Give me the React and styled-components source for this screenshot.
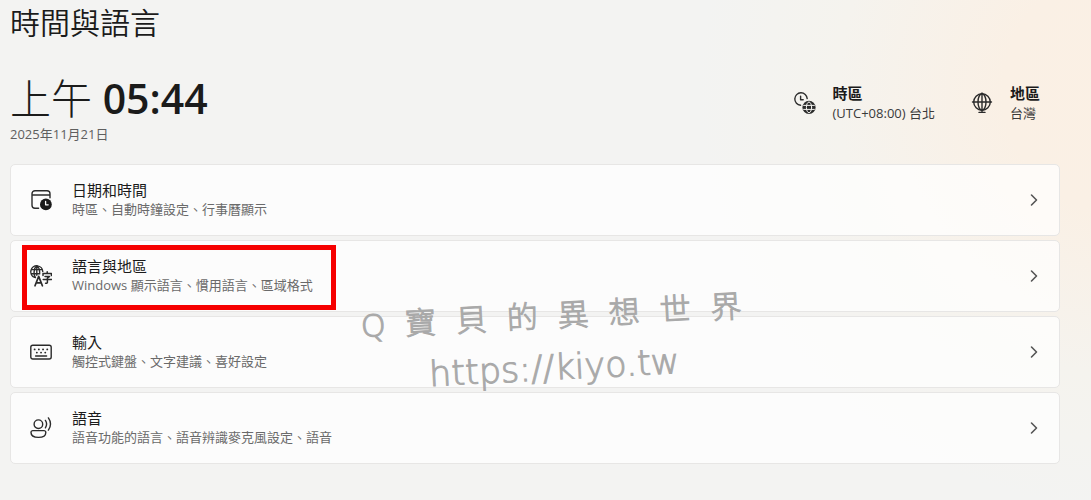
import React from "react";
import styled, { createGlobalStyle } from "styled-components";

const GlobalStyle = createGlobalStyle`
  * {
    box-sizing: border-box;
  }

  body {
    margin: 0;
    min-height: 100vh;
    background: radial-gradient(
        ellipse 40% 84% at 104% 18%,
        #fbf0e4 0%,
        #faf0e5 30%,
        #f5f3ee 68%,
        #f3f3f2 100%
      )
      no-repeat #f3f3f2;
    color: #1b1b1b;
    font-family: "Open Sans", "Noto Sans CJK TC", sans-serif;
  }
`;

const Page = styled.main`
  position: relative;
  padding: 5px 31px 36px 10px;
`;

const Title = styled.h1`
  margin: 0;
  font-size: 30px;
  line-height: 36px;
  font-weight: 350;
`;

const Hero = styled.header`
  display: flex;
  justify-content: space-between;
  align-items: flex-start;
  margin: 32px 0 20px;
`;

const Clock = styled.div`
  font-size: 41px;
  line-height: 51px;
  font-weight: 600;
`;

const Period = styled.span`
  font-weight: 300;
`;

const Today = styled.div`
  color: #5f5f5f;
  font-size: 13px;
  line-height: 20px;
`;

const Facts = styled.dl`
  display: flex;
  gap: 36px;
  margin: 10px 20px 0 0;
`;

const Fact = styled.div`
  display: grid;
  grid-template-columns: 22px auto;
  column-gap: 17px;
  align-items: center;

  svg {
    grid-row: 1 / 3;
  }
`;

const FactName = styled.dt`
  font-size: 15px;
  line-height: 20px;
  font-weight: 700;
`;

const FactValue = styled.dd`
  margin: 0;
  color: #3a3a3a;
  font-size: 13px;
  line-height: 20px;
`;

const List = styled.nav`
  display: flex;
  flex-direction: column;
  gap: 4px;
`;

const Row = styled.a`
  position: relative;
  display: flex;
  align-items: center;
  gap: 20px;
  min-height: 72px;
  padding: 8px 18px 8px 19px;
  border: 1px solid #e7e6e5;
  border-radius: 5px;
  background: rgba(255, 255, 255, 0.72);
  color: inherit;
  text-decoration: none;
`;

const RowText = styled.span`
  display: flex;
  flex: 1;
  flex-direction: column;
`;

const RowName = styled.span`
  font-size: 15px;
  line-height: 19px;
`;

const RowHint = styled.span`
  color: #6a6a6a;
  font-size: 13px;
  line-height: 19px;
`;

const Marker = styled.span`
  position: absolute;
  left: 11px;
  top: 4px;
  width: 314px;
  height: 65px;
  border: 5px solid #f60000;
  pointer-events: none;
`;

const Watermark = styled.div`
  position: absolute;
  left: 361px;
  top: 291px;
  color: #a9a9a9;
  -webkit-text-stroke: 1px #a9a9a9;
  pointer-events: none;
`;

const WatermarkName = styled.div`
  display: flex;
  gap: 20px;
  font-size: 31px;
  font-weight: 300;
  line-height: 48px;
  transform: rotate(-3deg);
`;

const WatermarkUrl = styled.div`
  margin: 5px 0 0 68px;
  font-family: "DejaVu Sans", sans-serif;
  font-size: 35px;
  font-weight: 200;
  line-height: 44px;
  transform: rotate(-3deg);
`;

const Icon = ({ children, size = 22 }) => (
  <svg
    width={size}
    height={size}
    viewBox={`0 0 ${size} ${size}`}
    fill="none"
    stroke="#2b2b2b"
    strokeWidth="1.4"
    strokeLinecap="round"
    strokeLinejoin="round"
    aria-hidden="true"
  >
    {children}
  </svg>
);

const TimeZoneIcon = () => (
  <Icon>
    <path d="M6.6 13.2A6.2 6.2 0 1 1 13.2 6.6M6.6 4.2v3.6h2.6" />
    <circle cx="15" cy="15.4" r="6.6" fill="#2b2b2b" stroke="none" />
    <g stroke="#f4f3f0" strokeWidth="1">
      <ellipse cx="15" cy="15.4" rx="2.6" ry="5.4" />
      <path d="M9.6 13.4h10.8M9.6 17.4h10.8" />
    </g>
  </Icon>
);

const RegionIcon = () => (
  <Icon>
    <circle cx="11" cy="10" r="8.3" />
    <ellipse cx="11" cy="10" rx="4" ry="8.3" />
    <path d="M1.5 10h19M11 1v18.5M8 20.4h6" />
  </Icon>
);

const DateIcon = () => (
  <Icon>
    <path d="M8.6 19.3H5a3 3 0 0 1-3-3V4.7a3 3 0 0 1 3-3h12a3 3 0 0 1 3 3v4M2 6h18" />
    <circle cx="15.9" cy="15.4" r="5.9" fill="#1b1b1b" stroke="none" />
    <path d="M15.6 12.4v3.4h2.6" stroke="#fff" strokeWidth="1.3" />
  </Icon>
);

const LanguageIcon = () => (
  <Icon>
    <g strokeWidth="1.4">
      <path d="M4.6 12.4A6 6 0 1 1 12.8 6.6M1.2 4.6h11M1.2 8.8h8.6" />
      <path d="M5.4 12.6C3.2 9 3.9 3 6.8 .8 8.7 2.2 9.7 4.600 9.7 7.4M6.8 .8v9.400" />
    </g>
    <path d="M5 20.8 8.7 11.400 12.4 20.8M6.2 17.8h5" strokeWidth="1.7" />
    <path
      d="M17.200 6.8v1.400M13 10.400v-1.800h8.400v1.800M15 11.400h4.600l-2.200 1.800v4.200q0 1-1.800.8M13.200 14.400h8.400"
      strokeWidth="1.5"
    />
  </Icon>
);

const KeyboardIcon = () => (
  <Icon>
    <rect x="0.8" y="4.2" width="20.4" height="13.8" rx="2" />
    <path
      d="M4.6 8.4h.1M8.8 8.4h.1M13 8.4h.1M17.2 8.4h.1M6.8 11.6h.1M11 11.6h.1M15.2 11.6h.1"
      strokeWidth="1.8"
    />
    <path d="M5.6 15h11" />
  </Icon>
);

const SpeechIcon = () => (
  <Icon>
    <circle cx="8.4" cy="7.2" r="4.3" />
    <path d="M2.8 13.6h11.2a1.800 1.800 0 0 1 1.800 1.800c0 3.2-3.2 5-7.4 5S1 18.6 1 15.4a1.800 1.800 0 0 1 1.800-1.800zM15.4 3.4q2.4 3.6 0 7.4M18.4 .9q4.2 6 0 12.2" />
  </Icon>
);

const ChevronIcon = () => (
  <Icon size={14}>
    <path d="M4.5 2 9.5 7 4.5 12" stroke="#555" strokeWidth="1.6" />
  </Icon>
);

const rows = [
  {
    id: "date",
    icon: <DateIcon />,
    name: "日期和時間",
    hint: "時區、自動時鐘設定、行事曆顯示",
  },
  {
    id: "language",
    icon: <LanguageIcon />,
    name: "語言與地區",
    hint: "Windows 顯示語言、慣用語言、區域格式",
    marked: true,
  },
  {
    id: "typing",
    icon: <KeyboardIcon />,
    name: "輸入",
    hint: "觸控式鍵盤、文字建議、喜好設定",
  },
  {
    id: "speech",
    icon: <SpeechIcon />,
    name: "語音",
    hint: "語音功能的語言、語音辨識麥克風設定、語音",
  },
];

const App = () => {
  return (
    <>
      <GlobalStyle />
      <Page lang="zh-Hant">
        <Title>時間與語言</Title>
        <Hero>
          <div>
            <Clock>
              <Period>上午</Period> 05:44
            </Clock>
            <Today>2025年11月21日</Today>
          </div>
          <Facts>
            <Fact>
              <TimeZoneIcon />
              <FactName>時區</FactName>
              <FactValue>(UTC+08:00) 台北</FactValue>
            </Fact>
            <Fact>
              <RegionIcon />
              <FactName>地區</FactName>
              <FactValue>台灣</FactValue>
            </Fact>
          </Facts>
        </Hero>

        <List>
          {rows.map((row) => (
            <Row key={row.id} href={`#${row.id}`}>
              {row.icon}
              <RowText>
                <RowName>{row.name}</RowName>
                <RowHint>{row.hint}</RowHint>
              </RowText>
              <ChevronIcon />
              {row.marked && <Marker />}
            </Row>
          ))}
        </List>

        <Watermark>
          <WatermarkName>
            {[..."Q寶貝的異想世界"].map((char) => (
              <span key={char}>{char}</span>
            ))}
          </WatermarkName>
          <WatermarkUrl>https://kiyo.tw</WatermarkUrl>
        </Watermark>
      </Page>
    </>
  );
};

export default App;
